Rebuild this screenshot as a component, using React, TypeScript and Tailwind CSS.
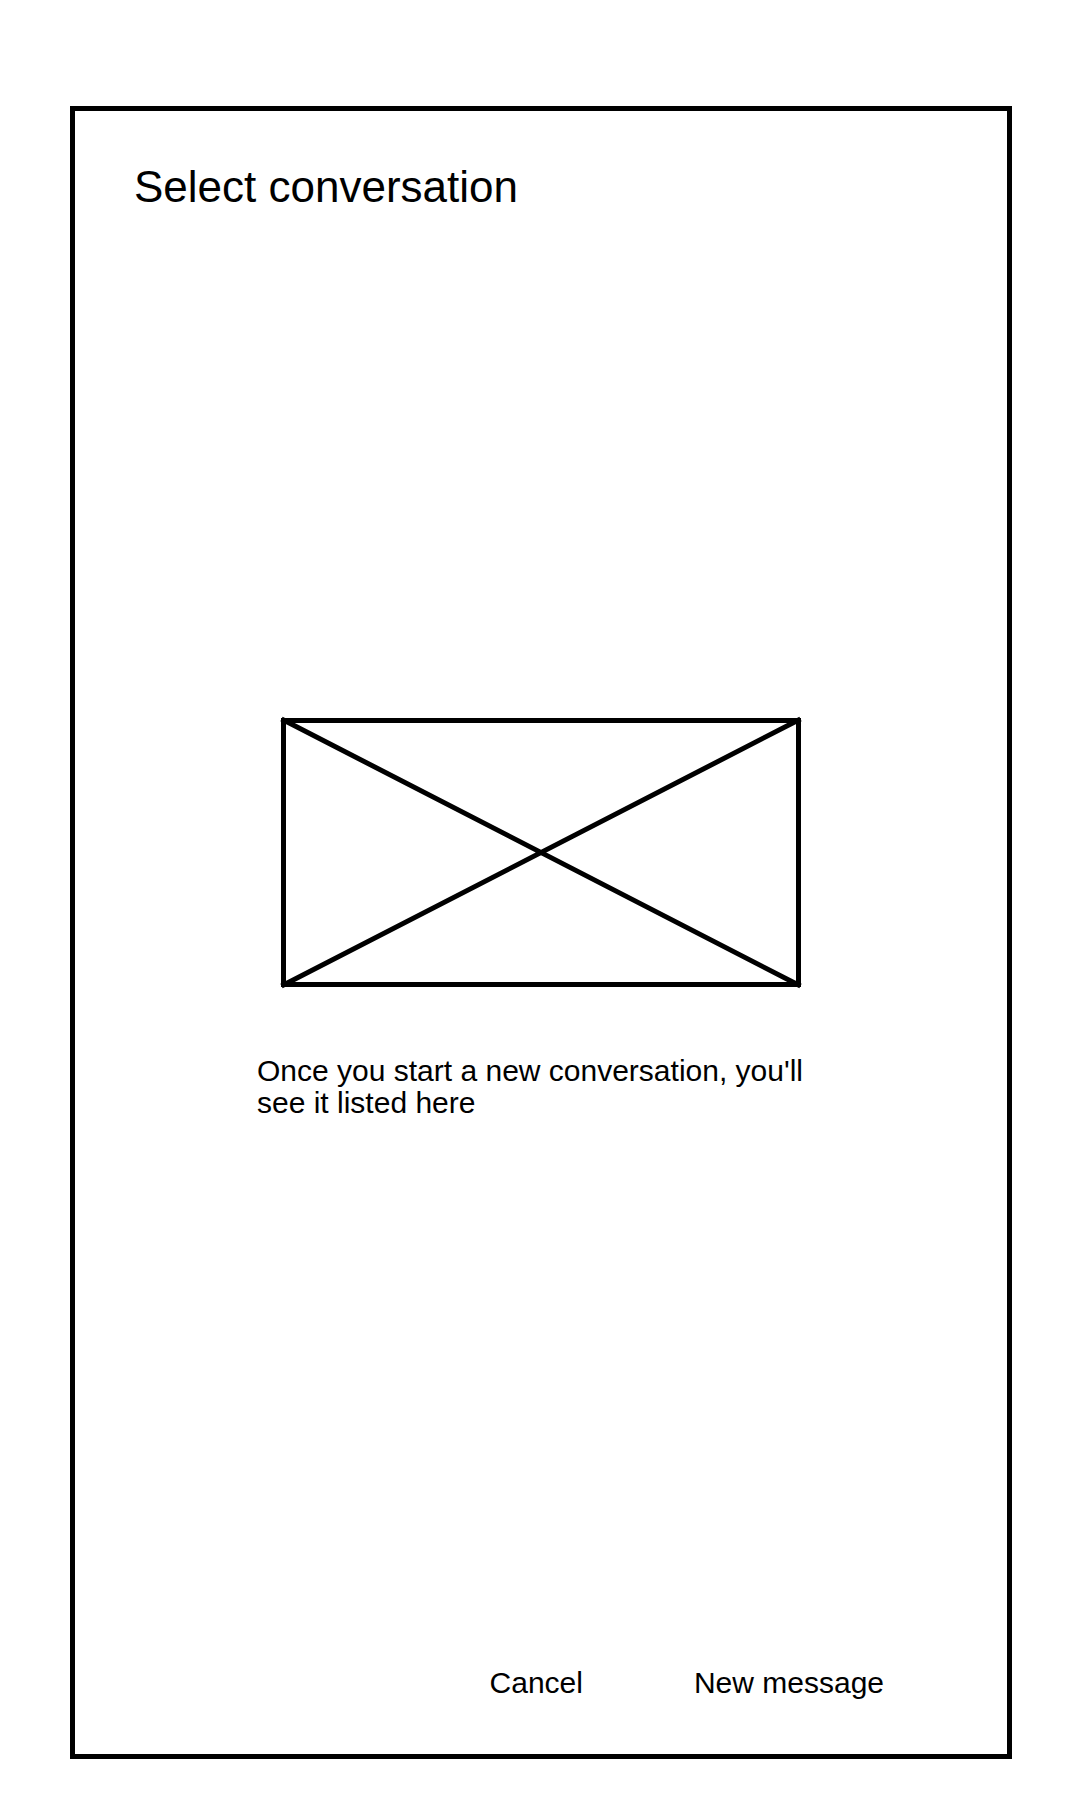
import React from "react";

function ImagePlaceholder() {
  return (
    <svg
      viewBox="0 0 520 269"
      role="img"
      aria-label="Illustration placeholder"
      className="mx-auto block w-11/12 max-w-[520px] overflow-visible"
      fill="none"
      stroke="#000"
      strokeWidth="5"
    >
      <rect x="2.5" y="2.5" width="515" height="264" />
      <path d="M0.5 1 519.5 268M519.5 1 0.5 268" />
    </svg>
  );
}

export default function App() {
  return (
    <div className="flex min-h-screen flex-col bg-white pr-[68px] pl-[70px] pt-[106px] pb-[41px] font-['Liberation_Sans',Arial,sans-serif] text-[30px] leading-8 text-black">
      <div className="flex grow flex-col border-5 border-black">
        <header className="px-[59px] pt-[52px]">
          <h1 className="text-[44px] leading-12">Select conversation</h1>
        </header>
        <main className="flex grow flex-col items-center justify-center pb-[41px]">
          <section className="w-full max-w-[568px]">
            <ImagePlaceholder />
            <p className="mt-[68px]">
              Once you start a new conversation, you'll see it listed here
            </p>
          </section>
        </main>
        <footer className="flex justify-end gap-[111px] pr-[123px] pb-[55px]">
          <button type="button" className="cursor-pointer">
            Cancel
          </button>
          <button type="button" className="cursor-pointer">
            New message
          </button>
        </footer>
      </div>
    </div>
  );
}
